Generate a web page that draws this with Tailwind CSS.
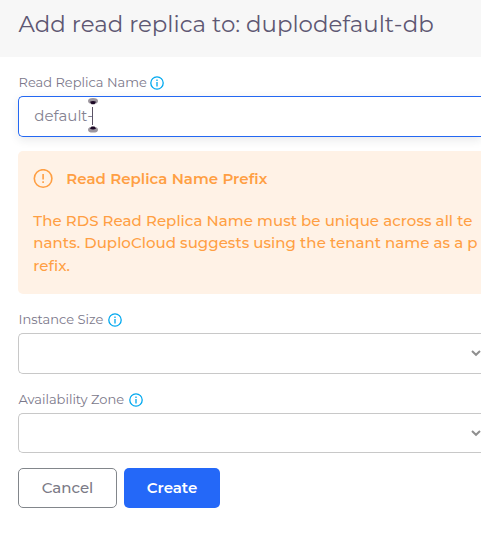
<!DOCTYPE html>
<html lang="en">
<head>
<meta charset="utf-8">
<title>Add read replica</title>
<script src="https://cdn.jsdelivr.net/npm/@tailwindcss/browser@4"></script>
</head>
<body class="h-[538px] w-full overflow-hidden bg-white font-[Montserrat,Inter,sans-serif] text-[#6e6b7b]">
<header class="flex h-[57px] items-center bg-[#f7f7f7] pb-[9px] pl-[18.5px]">
  <h1 class="text-[22.88px] leading-[30px] whitespace-nowrap text-[#5e5873]"><span>Add read replica to: duplodefault-db</span></h1>
</header>
<main class="w-full pl-[18px]">
  <div class="flex h-[39px] items-center gap-[3px] pt-[12px]">
    <label class="pb-[2px] pl-[0.5px] text-[13px] leading-5 text-[#7b788a]"><span>Read Replica Name</span></label>
    <svg class="size-[14px]" viewBox="0 0 14 14" fill="none" stroke="#00a8ef" stroke-width="1.3"><circle cx="7" cy="7" r="6.2"/><path d="M7 3.5v1.4M7 6v4.5"/></svg>
  </div>
  <div class="relative flex h-[41px] items-center rounded-l-[5px] border border-r-0 border-[#2468f2] bg-white pl-[15.3px] shadow-[0_3px_10px_rgba(34,41,47,0.1)]">
    <span class="text-[15px] text-[#858291]">default-</span>
    <svg class="absolute top-0 left-[68px] h-[38px] w-[12px]" viewBox="0 0 12 38"><ellipse cx="6" cy="3.9" rx="5" ry="2.9" fill="#9c969e"/><path d="M3 4.8Q6 3.4 9 4.8L7.5 7.2H4.5Z" fill="#1c0725"/><path d="M5.5 10v18" stroke="#5b5264"/><ellipse cx="6" cy="32.7" rx="5" ry="2.9" fill="#9c969e"/><path d="M3 31.8Q6 33.2 9 31.8L7.5 29.4H4.5Z" fill="#1c0725"/></svg>
  </div>
  <section class="mt-[14px] h-[143px] rounded-l-[5px] bg-[#fff2e6] pt-[16px] pl-[15.3px] text-[#ff9f43]">
    <div class="flex h-[24px] items-center gap-[13px]">
      <svg class="size-[20px]" viewBox="0 0 20 20" fill="none" stroke="#ff9f43" stroke-width="1.6"><circle cx="10.1" cy="9.5" r="8.8"/><path d="M10.1 5v5.4M10.1 12.3v1.8"/></svg>
      <h2 class="text-[15px] font-semibold tracking-[0.04px]"><span>Read Replica Name Prefix</span></h2>
    </div>
    <p class="mt-[18.5px] text-[15px] leading-[22.5px] font-medium tracking-[0.05px] whitespace-nowrap"><span>The RDS Read Replica Name must be unique across all te</span><br><span>nants. DuploCloud suggests using the tenant name as a p</span><br><span>refix.</span></p>
  </section>
  <div class="flex h-[39px] items-center gap-[4.5px] pt-[12px]">
    <label class="pb-[2px] pl-[0.5px] text-[13px] leading-5 text-[#7b788a]"><span>Instance Size</span></label>
    <svg class="size-[14px]" viewBox="0 0 14 14" fill="none" stroke="#00a8ef" stroke-width="1.3"><circle cx="7" cy="7" r="6.2"/><path d="M7 3.5v1.4M7 6v4.5"/></svg>
  </div>
  <div class="flex h-[41px] items-center justify-end rounded-l-[5px] border border-r-0 border-[#c8c8c8]">
    <svg class="h-[7px] w-[10px]" viewBox="0 0 10 7" fill="none" stroke="#8f8f8f" stroke-width="2"><path d="M1 1l4 3.8L9 1"/></svg>
  </div>
  <div class="flex h-[39px] items-center gap-[4.5px] pt-[12px]">
    <label class="pb-[2px] pl-[0.5px] text-[13px] leading-5 text-[#7b788a]"><span>Availability Zone</span></label>
    <svg class="size-[14px]" viewBox="0 0 14 14" fill="none" stroke="#00a8ef" stroke-width="1.3"><circle cx="7" cy="7" r="6.2"/><path d="M7 3.5v1.4M7 6v4.5"/></svg>
  </div>
  <div class="flex h-[40px] items-center justify-end rounded-l-[5px] border border-r-0 border-[#c8c8c8]">
    <svg class="h-[7px] w-[10px]" viewBox="0 0 10 7" fill="none" stroke="#8f8f8f" stroke-width="2"><path d="M1 1l4 3.8L9 1"/></svg>
  </div>
  <div class="mt-[15px] flex gap-[7px] text-[15px]">
    <button class="h-[40px] w-[99px] rounded-[5px] border border-[#82868b] font-medium text-[#7b7a86]"><span>Cancel</span></button>
    <button class="h-[40px] w-[96px] rounded-[5px] bg-[#2468f8] font-semibold text-white"><span>Create</span></button>
  </div>
</main>
</body>
</html>
